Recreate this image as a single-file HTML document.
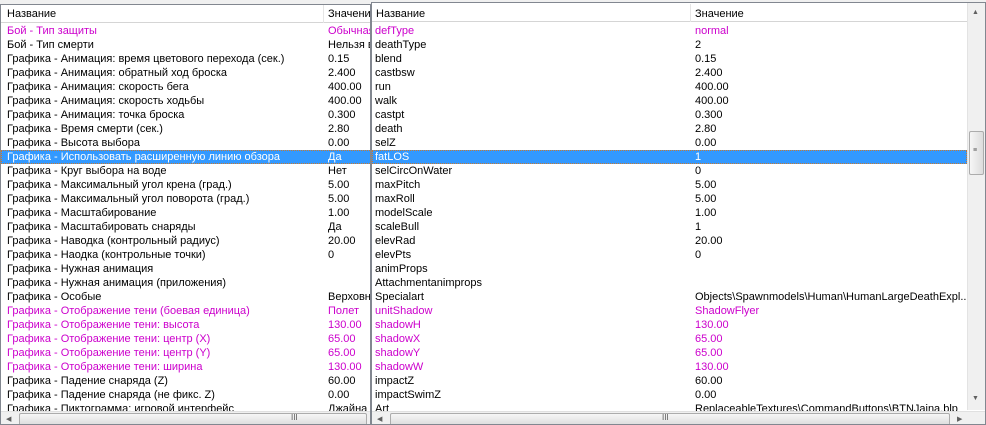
<!DOCTYPE html>
<html><head><meta charset="utf-8"><style>
*{margin:0;padding:0;box-sizing:border-box}
body{width:986px;height:425px;background:#f0f0f0;position:relative;overflow:hidden;font-family:"Liberation Sans",sans-serif;font-size:11px;color:#000}
.panel{position:absolute;background:#fff;border:1px solid #828790;overflow:hidden}
.hdr{position:absolute;left:0;top:0;height:18px;background:#fff;border-bottom:1px solid #d5d5d5;right:0}
.hdr span{position:absolute;top:3px;white-space:nowrap}
.hdr i{position:absolute;top:0;width:1px;height:18px;background:#e5e5e5}
.row{position:absolute;left:0;height:14px;white-space:nowrap;line-height:14px}
.row span{position:absolute;top:0}
.m{color:#c0c}
.sel{background:#3399ff;color:#fff;outline:1px dotted #c97a30;outline-offset:-1px}
.hs{position:absolute;height:15px;background:#f0f0f0;border-top:1px solid #e0e0e0}
.thumb{position:absolute;top:1px;height:13px;background:linear-gradient(#f6f6f6,#dcdcdc);border:1px solid #acacac;border-radius:2px}
.arr{position:absolute;top:3px;font-size:7px;color:#606060}
</style></head><body>

<div class="panel" style="left:0;top:4px;width:371px;height:421px">
<div class="hdr"><span style="left:6px">Название</span><i style="left:322px"></i><span style="left:327px">Значени</span></div>
<div id="L"></div>
<div class="hs" style="left:0;top:406px;width:371px">
<span class="arr" style="left:5px">◀</span>
<div class="thumb" style="left:18px;width:348px"></div>
<span style="position:absolute;left:290px;top:1px;font-size:8px;color:#555">III</span>
</div>
</div>

<div class="panel" style="left:371px;top:2px;width:615px;height:423px">
<div class="hdr" style="right:18px;top:1px"><span style="left:4px;top:4px">Название</span><i style="left:318px"></i><span style="left:323px;top:4px">Значение</span></div>
<div id="R"></div>
<div style="position:absolute;left:595px;top:0;width:18px;height:407px;background:#f0f0f0;border-left:1px solid #e3e3e3">
<span class="arr" style="left:4px;top:6px">▲</span>
<div style="position:absolute;left:1px;top:128px;width:15px;height:44px;background:linear-gradient(90deg,#f6f6f6,#dcdcdc);border:1px solid #acacac;border-radius:2px"></div>
<span style="position:absolute;left:5px;top:146px;font-size:7px;line-height:3px;color:#555">≡</span>
<span class="arr" style="left:4px;top:392px">▼</span>
</div>
<div class="hs" style="left:0;top:408px;width:613px">
<span class="arr" style="left:5px">◀</span>
<div class="thumb" style="left:18px;width:560px"></div>
<span style="position:absolute;left:290px;top:1px;font-size:8px;color:#555">III</span>
<span class="arr" style="left:585px">▶</span>
</div>
</div>

<script>
var L=[["Бой - Тип защиты","Обычная",1],["Бой - Тип смерти","Нельзя в"],["Графика - Анимация: время цветового перехода (сек.)","0.15"],["Графика - Анимация: обратный ход броска","2.400"],["Графика - Анимация: скорость бега","400.00"],["Графика - Анимация: скорость ходьбы","400.00"],["Графика - Анимация: точка броска","0.300"],["Графика - Время смерти (сек.)","2.80"],["Графика - Высота выбора","0.00"],["Графика - Использовать расширенную линию обзора","Да",2],["Графика - Круг выбора на воде","Нет"],["Графика - Максимальный угол крена (град.)","5.00"],["Графика - Максимальный угол поворота (град.)","5.00"],["Графика - Масштабирование","1.00"],["Графика - Масштабировать снаряды","Да"],["Графика - Наводка (контрольный радиус)","20.00"],["Графика - Наодка (контрольные точки)","0"],["Графика - Нужная анимация",""],["Графика - Нужная анимация (приложения)",""],["Графика - Особые","Верховны"],["Графика - Отображение тени (боевая единица)","Полет",1],["Графика - Отображение тени: высота","130.00",1],["Графика - Отображение тени: центр (X)","65.00",1],["Графика - Отображение тени: центр (Y)","65.00",1],["Графика - Отображение тени: ширина","130.00",1],["Графика - Падение снаряда (Z)","60.00"],["Графика - Падение снаряда (не фикс. Z)","0.00"],["Графика - Пиктограмма: игровой интерфейс","Джайна"]];
var R=[["defType","normal",1],["deathType","2"],["blend","0.15"],["castbsw","2.400"],["run","400.00"],["walk","400.00"],["castpt","0.300"],["death","2.80"],["selZ","0.00"],["fatLOS","1",2],["selCircOnWater","0"],["maxPitch","5.00"],["maxRoll","5.00"],["modelScale","1.00"],["scaleBull","1"],["elevRad","20.00"],["elevPts","0"],["animProps",""],["Attachmentanimprops",""],["Specialart","Objects\\Spawnmodels\\Human\\HumanLargeDeathExpl..."],["unitShadow","ShadowFlyer",1],["shadowH","130.00",1],["shadowX","65.00",1],["shadowY","65.00",1],["shadowW","130.00",1],["impactZ","60.00"],["impactSwimZ","0.00"],["Art","ReplaceableTextures\\CommandButtons\\BTNJaina.blp"]];
function b(id,d,top,x1,x2,w){var h="";d.forEach(function(r,i){var c=r[2]==1?"m":r[2]==2?"sel":"";h+='<div class="row '+c+'" style="top:'+(top+i*14)+'px;width:'+w+'px"><span style="left:'+x1+'px">'+r[0]+'</span><span style="left:'+x2+'px">'+r[1]+'</span></div>';});document.getElementById(id).innerHTML=h;}
b("L",L,19,6,327,371);
b("R",R,21,3,323,595);
</script>
</body></html>
